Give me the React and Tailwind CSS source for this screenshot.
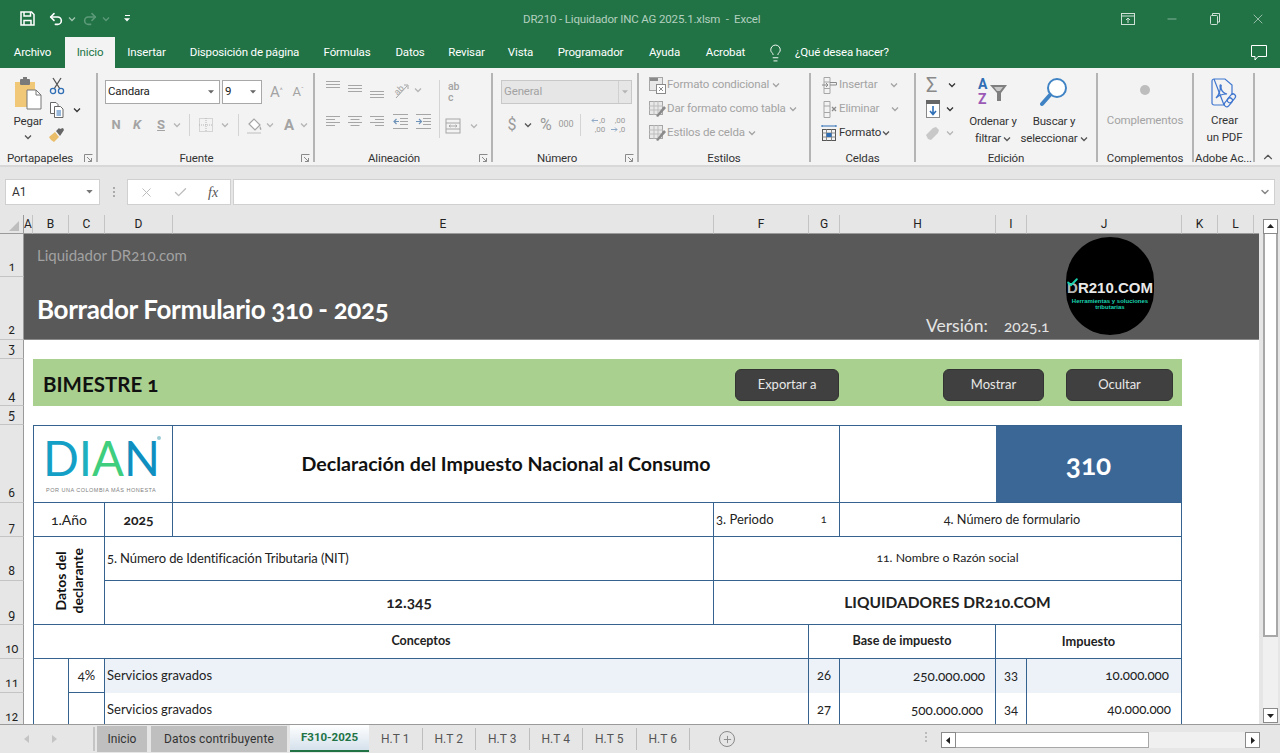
import React from 'react';
import { Undo2, Redo2, ChevronDown, ChevronUp, X, Minus, Check, Plus, Lightbulb } from 'lucide-react';

const Chev = ({ className = 'ml-[4px]', color = '#555' }) => (
  <svg width="8" height="6" viewBox="0 0 8 6" className={`shrink-0 ${className}`}>
    <path d="M1 1.5 L4 4.5 L7 1.5" fill="none" stroke={color} strokeWidth="1.3" />
  </svg>
);

const Caret = ({ className = '', color = '#666' }) => (
  <svg width="8" height="5" viewBox="0 0 8 5" className={className}>
    <path d="M0 0 H8 L4 4.5 Z" fill={color} />
  </svg>
);

const Launcher = ({ className = '', color = '#8a8a8a' }) => (
  <svg width="9" height="9" viewBox="0 0 9 9" className={className}>
    <path d="M0.5 8 V0.5 H8.5 M3 3 L7.5 7.5 M7.5 4 V7.5 H4" fill="none" stroke={color} strokeWidth="1" />
  </svg>
);

// little stacks of lines for the alignment buttons
const Lines = ({ widths = [14, 14, 14], align = 'left', color = '#a6a6a6', offset = 0, step = 3 }) => (
  <svg width="14" height="18" viewBox="0 0 14 18">
    {widths.map((w, i) => {
      const x = align === 'left' ? 0 : align === 'right' ? 14 - w : (14 - w) / 2;
      return <rect key={i} x={x} y={offset + i * step} width={w} height="1" fill={color} />;
    })}
  </svg>
);

const SaveIcon = () => (
  <svg width="15" height="15" viewBox="0 0 15 15" fill="none" stroke="white" strokeWidth="1.5">
    <path d="M1 1 H11.5 L14 3.5 V14 H1 Z" />
    <path d="M4 1 V5 H10.5 V1 M4 14 V9.5 H11 V14" />
  </svg>
);

const PasteIcon = () => (
  <svg width="28" height="34" viewBox="0 0 28 34">
    <path d="M1 5 H21 V30 H1 Z" fill="#f0c878" />
    <rect x="6" y="2" width="10" height="6" fill="#7a7a7a" rx="1" />
    <rect x="9" y="0" width="4" height="3" fill="#7a7a7a" />
    <path d="M13 13 H22 L27 18 V32 H13 Z" fill="#fff" stroke="#777" />
    <path d="M22 13 V18 H27" fill="none" stroke="#777" />
  </svg>
);

const ScissorsIcon = () => (
  <svg width="16" height="18" viewBox="0 0 16 18" fill="none">
    <path d="M4 1 L11 12 M12 1 L5 12" stroke="#555" strokeWidth="1.3" />
    <circle cx="4" cy="14" r="2.6" stroke="#2f6eb5" strokeWidth="1.3" />
    <circle cx="12" cy="14" r="2.6" stroke="#2f6eb5" strokeWidth="1.3" />
  </svg>
);

const CopyIcon = () => (
  <svg width="15" height="16" viewBox="0 0 15 16" fill="#fff" stroke="#666">
    <path d="M1.5 0.5 H7 L9 2.5 V11.5 H1.5 Z" />
    <path d="M5.5 4.5 H11.5 L14 7 V15.5 H5.5 Z" />
    <path d="M7.5 9 H12 M7.5 11 H12 M7.5 13 H12" stroke="#2f6eb5" />
  </svg>
);

const BrushIcon = () => (
  <svg width="16" height="15" viewBox="0 0 16 15">
    <path d="M0 10 L6 5 L10 10 L5 15 C3 14 1 12 0 10 Z" fill="#e9bd69" />
    <path d="M7 4 L10 1 L11 2 L14 1 L15 3 L11 9 Z" fill="#666" />
  </svg>
);

const BorderIcon = () => (
  <svg width="14" height="14" viewBox="0 0 14 14" fill="none" stroke="#b5b5b5" strokeDasharray="1 1">
    <rect x="0.5" y="0.5" width="13" height="13" />
    <path d="M7 0 V14 M0 7 H14" />
  </svg>
);

const FillIcon = () => (
  <svg width="17" height="17" viewBox="0 0 17 17">
    <path d="M3 7 L8 2 L14 8 L9 13 Z" fill="#fff" stroke="#a6a6a6" strokeWidth="1.2" />
    <path d="M14 9 C15 11 16 12 15 13 C14 13 13 11 14 9 Z" fill="#a6a6a6" />
    <rect x="1" y="15" width="14" height="2" fill="#d9d9d9" />
  </svg>
);

const OrientIcon = () => (
  <svg width="20" height="18" viewBox="0 0 20 18" fill="none" className="overflow-visible">
    <text x="3" y="12" fontSize="9" fill="#a6a6a6" transform="rotate(-45 8 9)" fontFamily="Roboto, sans-serif">ab</text>
    <path d="M5 17 L16 5 M13 4 H17 V8" stroke="#a6a6a6" />
  </svg>
);

const IndentIcon = ({ flip }) => (
  <svg width="15" height="15" viewBox="0 0 15 15" fill="none">
    <path d="M0 .5 H15 M7 4.5 H15 M7 7.5 H15 M7 10.5 H15 M0 14.5 H15" stroke="#a6a6a6" />
    <path d={flip ? 'M0 7.5 H5 M3 5 L5.5 7.5 L3 10' : 'M6 7.5 H1 M3.5 5 L1 7.5 L3.5 10'} stroke="#6f93b8" strokeWidth="1.2" />
  </svg>
);

const MergeIcon = () => (
  <svg width="16" height="16" viewBox="0 0 16 16" fill="none" stroke="#a6a6a6">
    <rect x="1" y="1" width="14" height="14" />
    <path d="M1 5 H15 M1 11 H15 M4 8 H12 M4 8 L5.5 6.8 M4 8 L5.5 9.2 M12 8 L10.5 6.8 M12 8 L10.5 9.2" />
  </svg>
);

const Arrow = ({ left }) => (
  <svg width="7" height="5" viewBox="0 0 7 5" className="mr-[1px]">
    <path d={left ? 'M7 2.5 H1 M3 0.5 L1 2.5 L3 4.5' : 'M0 2.5 H6 M4 0.5 L6 2.5 L4 4.5'} fill="none" stroke="#8fa9c6" />
  </svg>
);

const DecimalIcon = ({ top, bottom, left }) => (
  <div className="w-[18px] h-[18px] text-[8px] tracking-normal leading-[9px] text-[#9a9a9a] flex flex-col items-end">
    <div className="flex items-center">{left && <Arrow left />}{top}</div>
    <div className="flex items-center">{!left && <Arrow />}{bottom}</div>
  </div>
);

const TableIcon = ({ kind }) => (
  <svg width="17" height="17" viewBox="0 0 17 17">
    <rect x="0.5" y="0.5" width="13" height="13" fill="#e8e8e8" stroke="#a6a6a6" />
    {kind === 'cond' && <rect x="1" y="1" width="8" height="3" fill="#8a8a8a" />}
    {kind === 'cond' && <rect x="7.5" y="7.5" width="9" height="9" fill="#fff" stroke="#8a8a8a" />}
    {kind === 'cond' && <path d="M10 10 L14 14 M14 10 L10 14" stroke="#8a8a8a" />}
    {kind !== 'cond' && <path d="M0 5 H14 M0 9 H14 M5 0 V14 M9 0 V14" stroke="#bdbdbd" />}
    {kind !== 'cond' && <path d="M7 15 L15 5 L17 7 L9 16 Z" fill="#8a8a8a" />}
  </svg>
);

const CellsIcon = ({ kind }) => (
  <svg width="16" height="17" viewBox="0 0 16 17" fill="none" stroke="#a6a6a6">
    <path d="M3 .5 H9 V5 H3 Z M3 11.5 H9 V16.5 H3 Z M3 5 V11.5 M9 5 V11.5" />
    {kind === 'ins' && <path d="M9 8 H15.5 V5.5 H9 M1 8 H7 M5 6 L7 8 L5 10" stroke="#8a8a8a" />}
    {kind === 'del' && <path d="M11 6 L15 10 M15 6 L11 10" stroke="#8a8a8a" strokeWidth="1.3" />}
  </svg>
);

const FormatIcon = () => (
  <svg width="16" height="17" viewBox="0 0 16 17" fill="none">
    <path d="M1 1 H15 M1 0 V2 M15 0 V2" stroke="#2f6eb5" />
    <rect x="1.5" y="4.5" width="13" height="11" stroke="#555" />
    <path d="M1.5 8 H14.5 M1.5 12 H14.5 M5.5 4.5 V15.5 M10.5 4.5 V15.5" stroke="#888" />
    <rect x="5.5" y="8" width="5" height="4" fill="#2f6eb5" />
  </svg>
);

const FillDownIcon = () => (
  <svg width="14" height="18" viewBox="0 0 14 18">
    <rect x="0.5" y="0.5" width="13" height="17" fill="#fff" stroke="#888" />
    <rect x="0" y="0" width="14" height="4" fill="#666" />
    <path d="M7 6 V14 M4 11 L7 14.5 L10 11" fill="none" stroke="#2f6eb5" strokeWidth="1.6" />
  </svg>
);

const EraserIcon = () => (
  <svg width="14" height="13" viewBox="0 0 14 13">
    <path d="M0 8 L7 1 L10 0 L13 3 L12 6 L5 13 L2 12 Z" fill="#c8c8c8" />
  </svg>
);

const SortIcon = () => (
  <div className="relative w-[30px] h-[30px] font-bold text-[14px] leading-[14px] tracking-normal">
    <div className="text-[#2f6eb5]">A</div>
    <div className="text-[#9b59b6] mt-[1px]">Z</div>
    <svg width="18" height="18" viewBox="0 0 18 18" className="absolute left-[12px] top-[7px]">
      <path d="M0 1 H17 L11 9 V17 H7 V9 Z" fill="#7f7f7f" />
      <path d="M4 3 H13 L10 7 H7 Z" fill="#c8c8c8" />
    </svg>
  </div>
);

const FindIcon = () => (
  <svg width="28" height="30" viewBox="0 0 28 30" fill="none">
    <circle cx="17" cy="11" r="9" stroke="#3f83c4" strokeWidth="2" fill="#fff" />
    <path d="M10 18 L2 27" stroke="#3f83c4" strokeWidth="4" strokeLinecap="round" />
  </svg>
);

const PdfIcon = () => (
  <svg width="27" height="31" viewBox="0 0 27 31" fill="none" stroke="#3f76cf" strokeWidth="1.2">
    <path d="M3 1 H14 L21 7 V17 M13 27 H3 C2 27 1 26 1 25 V3 C1 2 2 1 3 1 Z" />
    <path d="M5 20 C8 17 10 11 9 8 C9 6 11 7 10 9 C10 12 12 15 16 16 C12 16 8 17 5 20 Z" />
    <rect x="15" y="18" width="10" height="5" rx="2.5" transform="rotate(-50 20 20)" />
    <rect x="12" y="22" width="10" height="5" rx="2.5" transform="rotate(-50 17 24)" />
  </svg>
);

const RibbonIcon = () => (
  <svg width="14" height="12" viewBox="0 0 14 12" fill="none" stroke="#cfe0d6">
    <rect x="0.5" y="0.5" width="13" height="11" />
    <path d="M0 3 H14 M7 10 V5 M5 7 L7 5 L9 7" />
  </svg>
);

const RestoreIcon = () => (
  <svg width="10" height="12" viewBox="0 0 10 12" fill="none" stroke="#cfe0d6">
    <rect x="0.5" y="2.5" width="7" height="9" rx="1" />
    <path d="M2.5 2.5 V0.5 H9.5 V9 H7.5" />
  </svg>
);

const CommentIcon = () => (
  <svg width="16" height="16" viewBox="0 0 16 16" fill="none" stroke="white">
    <path d="M0.5 0.5 H15.5 V11.5 H7 L4 15 V11.5 H0.5 Z" />
  </svg>
);

const tabs = [
  { label: 'Archivo', w: 'w-[65px]' },
  { label: 'Inicio', w: 'w-[50px]', active: true },
  { label: 'Insertar', w: 'w-[63px]' },
  { label: 'Disposición de página', w: 'w-[133px]' },
  { label: 'Fórmulas', w: 'w-[72px]' },
  { label: 'Datos', w: 'w-[54px]' },
  { label: 'Revisar', w: 'w-[59px]' },
  { label: 'Vista', w: 'w-[49px]' },
  { label: 'Programador', w: 'w-[91px]' },
  { label: 'Ayuda', w: 'w-[57px]' },
  { label: 'Acrobat', w: 'w-[65px]' },
];

const TitleBar = () => (
  <div className="h-[37px] bg-[#217346] flex items-center relative shrink-0">
    <div className="ml-[20px] flex items-center">
      <SaveIcon />
      <Undo2 className="ml-[13px] w-[16px] h-[16px] text-white" strokeWidth={2.4} />
      <Chev className="ml-[4px]" color="#9fc4ae" />
      <Redo2 className="ml-[6px] w-[16px] h-[16px] text-[#5c9a78]" strokeWidth={2.4} />
      <Chev className="ml-[4px]" color="#5c9a78" />
      <div className="ml-[14px] flex flex-col items-center gap-[2px]">
        <div className="w-[5px] h-[1px] bg-white" />
        <Caret color="white" className="w-[6px] h-[4px]" />
      </div>
    </div>
    <div className="absolute left-[523px] top-[11px] text-[11.5px] tracking-[-0.15px] leading-[16px] text-[#b4d0bf] whitespace-pre">
      DR210 - Liquidador INC AG 2025.1.xlsm  -  Excel
    </div>
    <div className="ml-auto flex items-center">
      <div className="w-[44px] flex justify-center"><RibbonIcon /></div>
      <div className="w-[43px] flex justify-center"><Minus className="w-[14px] h-[14px] text-[#cfe0d6]" strokeWidth={1} /></div>
      <div className="w-[43px] flex justify-center"><RestoreIcon /></div>
      <div className="w-[44px] flex justify-center"><X className="w-[16px] h-[16px] text-[#cfe0d6]" strokeWidth={1} /></div>
    </div>
  </div>
);

const TabRow = () => (
  <div className="h-[31px] bg-[#217346] flex items-stretch shrink-0 text-[11.5px] tracking-[-0.15px] text-white">
    {tabs.map(t => (
      <div
        key={t.label}
        className={`${t.w} flex items-center justify-center ${t.active ? 'bg-[#f3f3f3] text-[#217346]' : ''}`}
      >
        {t.label}
      </div>
    ))}
    <Lightbulb className="ml-[8px] mt-[6px] w-[19px] h-[20px] text-white" strokeWidth={1.2} />
    <div className="ml-[10px] flex items-center">¿Qué desea hacer?</div>
    <div className="ml-auto mr-[13px] flex items-center"><CommentIcon /></div>
  </div>
);

const Group = ({ w, label, launcher, children }) => (
  <div className={`${w} h-[89px] border-r-2 border-[#b4b4b4] flex flex-col shrink-0`}>
    <div className="h-[78px] flex shrink-0">{children}</div>
    <div className="h-[16px] shrink-0 relative flex items-center justify-center text-[#333]">
      {label}
      {launcher && <Launcher className="absolute right-[3px] top-[3px]" />}
    </div>
  </div>
);

const MenuRow = ({ icon, text, dim, chevClass = 'ml-[3px]', iconClass = 'w-[18px]' }) => (
  <div className={`h-[24px] flex items-center whitespace-nowrap ${dim ? 'text-[#a3a3a3]' : 'text-[#333]'}`}>
    <div className={`${iconClass} shrink-0 flex justify-center`}>{icon}</div>
    <span className="ml-[1px]">{text}</span>
    <Chev className={chevClass} color={dim ? '#a3a3a3' : '#555'} />
  </div>
);

const Ribbon = () => (
  <div className="h-[99px] bg-[#f3f3f3] border-b-2 border-[#d8d8d8] pt-[5px] flex shrink-0 relative text-[11.5px] tracking-[-0.15px]">
    <Group w="w-[98px]" label={<span className="mr-[16px]">Portapapeles</span>} launcher>
      <div className="ml-[12px] w-[32px] flex flex-col items-center">
        <div className="mt-[4px]"><PasteIcon /></div>
        <div className="mt-[2px] leading-[16px] text-[#333]">Pegar</div>
        <Chev className="mt-[5px]" />
      </div>
      <div className="ml-[5px] flex flex-col pt-[1px]">
        <div className="h-[24px] flex items-center"><ScissorsIcon /></div>
        <div className="h-[24px] flex items-center"><CopyIcon /><Chev className="ml-[9px]" color="#333" /></div>
        <div className="h-[24px] flex items-center"><BrushIcon /></div>
      </div>
    </Group>

    <Group w="w-[217px]" label={<span className="ml-[-18px]">Fuente</span>} launcher>
      <div className="ml-[7px] pt-[7px] flex flex-col gap-[9px]">
        <div className="h-[24px] flex items-center">
          <div className="w-[115px] h-[24px] bg-white border border-[#a8a8a8] flex items-center justify-between pl-[2px] pr-[5px] text-[#222]">
            Candara <Caret className="w-[6px] h-[4px]" />
          </div>
          <div className="ml-[2px] w-[40px] h-[24px] bg-white border border-[#a8a8a8] flex items-center justify-between pl-[2px] pr-[5px] text-[#222]">
            9 <Caret className="w-[6px] h-[4px]" />
          </div>
          <span className="ml-[8px] text-[15px] text-[#a3a3a3]">A<sup className="text-[7px]">^</sup></span>
          <span className="ml-[10px] text-[13px] text-[#a3a3a3]">A<sup className="text-[7px]">ˇ</sup></span>
        </div>
        <div className="h-[24px] flex items-center font-bold text-[#a3a3a3]">
          <span className="ml-[5px] w-[12px] text-[13px] text-center">N</span>
          <span className="ml-[9px] w-[12px] text-[13px] text-center italic">K</span>
          <span className="ml-[12px] w-[12px] text-[13px] text-center underline">S</span>
          <Chev className="ml-[6px]" color="#b5b5b5" />
          <div className="ml-[8px] w-[1px] h-[22px] bg-[#d4d4d4]" />
          <div className="ml-[9px]"><BorderIcon /></div>
          <Chev className="ml-[8px]" color="#b5b5b5" />
          <div className="ml-[9px] w-[1px] h-[22px] bg-[#d4d4d4]" />
          <div className="ml-[7px]"><FillIcon /></div>
          <Chev className="ml-[3px]" color="#b5b5b5" />
          <span className="ml-[10px] text-[15px]">A</span>
          <Chev className="ml-[6px]" color="#b5b5b5" />
        </div>
      </div>
    </Group>

    <Group w="w-[178px]" label={<span className="ml-[-18px]">Alineación</span>} launcher>
      <div className="ml-[11px] pt-[8px] flex flex-col gap-[13px] w-[112px]">
        <div className="h-[18px] flex items-center">
          <div className="w-[15px] h-[18px]"><Lines /></div>
          <div className="ml-[7px] w-[15px] h-[18px]"><Lines offset={4} /></div>
          <div className="ml-[7px] w-[15px] h-[18px]"><Lines offset={10} /></div>
          <div className="ml-[6px]"><OrientIcon /></div>
          <Chev className="ml-[3px]" color="#b5b5b5" />
        </div>
        <div className="h-[18px] flex items-center">
          <div className="w-[15px] h-[18px]"><Lines widths={[14, 9, 14, 9]} offset={4} /></div>
          <div className="ml-[7px] w-[15px] h-[18px]"><Lines widths={[14, 9, 14, 9]} align="center" offset={4} /></div>
          <div className="ml-[7px] w-[15px] h-[18px]"><Lines widths={[14, 9, 14, 9]} align="right" offset={4} /></div>
          <div className="ml-[8px]"><IndentIcon /></div>
          <div className="ml-[8px]"><IndentIcon flip /></div>
        </div>
      </div>
      <div className="ml-[1px] w-[1px] h-[58px] mt-[7px] bg-[#d4d4d4]" />
      <div className="ml-[5px] pt-[8px] flex flex-col text-[#a3a3a3]">
        <div className="h-[22px] text-[10.5px] leading-[11px] font-medium pl-[3px]">ab<br />c</div>
        <div className="mt-[15px] flex items-center">
          <MergeIcon />
          <Chev className="ml-[9px]" color="#b5b5b5" />
        </div>
      </div>
    </Group>

    <Group w="w-[146px]" label={<span className="ml-[-16px]">Número</span>} launcher>
      <div className="ml-[8px] pt-[7px] flex flex-col gap-[9px]">
        <div className="w-[131px] h-[24px] bg-[#e6e6e6] border border-[#c8c8c8] flex items-center justify-between pl-[2px] pr-[3px] text-[#a3a3a3]">
          General
          <div className="h-[22px] border-l border-[#d0d0d0] pl-[3px] flex items-center"><Caret className="w-[6px] h-[4px]" color="#b5b5b5" /></div>
        </div>
        <div className="h-[24px] flex items-center text-[#9a9a9a]">
          <span className="ml-[6px] w-[10px] text-[16px] text-center">$</span>
          <Chev className="ml-[7px]" color="#555" />
          <span className="ml-[8px] text-[16px]">%</span>
          <span className="ml-[7px] text-[9px]">000</span>
          <div className="ml-[7px] w-[1px] h-[22px] bg-[#d4d4d4]" />
          <div className="ml-[6px]"><DecimalIcon top=",0" bottom=",00" left /></div>
          <div className="ml-[2px]"><DecimalIcon top=",00" bottom=",0" /></div>
        </div>
      </div>
    </Group>

    <Group w="w-[172px]" label="Estilos">
      <div className="ml-[9px] flex flex-col pt-0">
        <MenuRow dim icon={<TableIcon kind="cond" />} text="Formato condicional" />
        <MenuRow dim icon={<TableIcon />} text="Dar formato como tabla" />
        <MenuRow dim icon={<TableIcon />} text="Estilos de celda" />
      </div>
    </Group>

    <Group w="w-[105px]" label="Celdas">
      <div className="ml-[9px] flex flex-col">
        <MenuRow dim icon={<CellsIcon kind="ins" />} text="Insertar" chevClass="ml-[13px]" />
        <MenuRow dim icon={<CellsIcon kind="del" />} text="Eliminar" chevClass="ml-[12px]" />
        <MenuRow icon={<FormatIcon />} text="Formato" chevClass="ml-[1px]" />
      </div>
    </Group>

    <Group w="w-[182px]" label="Edición">
      <div className="ml-[10px] flex flex-col w-[40px]">
        <div className="h-[24px] flex items-center">
          <span className="text-[20px] leading-[20px] text-[#8a8a8a]">Σ</span>
          <Chev className="ml-[11px]" color="#333" />
        </div>
        <div className="h-[24px] flex items-center"><FillDownIcon /><Chev className="ml-[6px]" color="#333" /></div>
        <div className="h-[24px] flex items-center"><EraserIcon /><Chev className="ml-[6px]" color="#b5b5b5" /></div>
      </div>
      <div className="ml-[2px] w-[50px] flex flex-col items-center leading-[17px] text-[#333]">
        <div className="mt-[4px] h-[30px]"><SortIcon /></div>
        <div className="mt-[6px] whitespace-nowrap">Ordenar y</div>
        <div className="flex items-center">filtrar<Chev className="ml-[2px]" /></div>
      </div>
      <div className="ml-[1px] w-[70px] flex flex-col items-center leading-[17px] text-[#333]">
        <div className="mt-[4px] h-[30px]"><FindIcon /></div>
        <div className="mt-[6px] whitespace-nowrap">Buscar y</div>
        <div className="flex items-center">seleccionar<Chev className="ml-[2px]" /></div>
      </div>
    </Group>

    <Group w="w-[96px]" label="Complementos">
      <div className="w-full flex flex-col items-center">
        <div className="mt-[12px] w-[10px] h-[10px] rounded-full bg-[#bdbdbd]" />
        <div className="mt-[17px] leading-[17px] text-[#a3a3a3]">Complementos</div>
      </div>
    </Group>

    <Group w="w-[61px]" label="Adobe Ac...">
      <div className="w-full flex flex-col items-center pl-[2px] leading-[17px] text-[#333]">
        <div className="mt-[5px] h-[31px]"><PdfIcon /></div>
        <div className="mt-[3px]">Crear</div>
        <div>un PDF</div>
      </div>
    </Group>

    <div className="flex-1 flex items-end justify-center pb-[1px]">
      <ChevronUp className="w-[14px] h-[14px] text-[#555]" />
    </div>
  </div>
);

const FormulaBar = () => (
  <div className="h-[48px] bg-[#e6e6e6] flex items-start pt-[12px] shrink-0 text-[#333]">
    <div className="ml-[5px] w-[95px] h-[26px] bg-white border border-[#d0d0d0] flex items-center justify-between pl-[6px] pr-[6px] text-[12px]">
      A1 <Caret className="w-[7px] h-[4px]" color="#777" />
    </div>
    <div className="ml-[13px] mt-[8px] flex flex-col gap-[2px]">
      <div className="w-[2px] h-[2px] bg-[#aaa]" />
      <div className="w-[2px] h-[2px] bg-[#aaa]" />
      <div className="w-[2px] h-[2px] bg-[#aaa]" />
    </div>
    <div className="ml-[12px] w-[104px] h-[26px] bg-white border border-[#d0d0d0] flex items-center">
      <X className="ml-[11px] w-[15px] h-[15px] text-[#bdbdbd]" strokeWidth={1.6} />
      <Check className="ml-[19px] w-[15px] h-[15px] text-[#bdbdbd]" strokeWidth={2.2} />
      <span className="ml-[20px] text-[14px] italic font-['Liberation_Serif',serif] text-[#555]">fx</span>
    </div>
    <div className="ml-[2px] flex-1 mr-[5px] h-[26px] bg-white border border-[#d0d0d0] flex items-center justify-end pr-[3px]">
      <ChevronDown className="w-[12px] h-[12px] text-[#888]" strokeWidth={3} />
    </div>
  </div>
);

const columns = [
  { l: 'A', c: 'col-[2]' }, { l: 'B', c: 'col-[3]' }, { l: 'C', c: 'col-[4]' }, { l: 'D', c: 'col-[5]' },
  { l: 'E', c: 'col-[6]' }, { l: 'F', c: 'col-[7]' }, { l: 'G', c: 'col-[8]' }, { l: 'H', c: 'col-[9]' },
  { l: 'I', c: 'col-[10]' }, { l: 'J', c: 'col-[11]' }, { l: 'K', c: 'col-[12]' }, { l: 'L', c: 'col-[13]' },
];

const rowLabels = [
  { l: '1', c: 'row-[2]' }, { l: '2', c: 'row-[3]' }, { l: '3', c: 'row-[4]' }, { l: '4', c: 'row-[5]' },
  { l: '5', c: 'row-[6]' }, { l: '6', c: 'row-[7]' }, { l: '7', c: 'row-[8]' }, { l: '8', c: 'row-[9]' },
  { l: '9', c: 'row-[10]' }, { l: '10', c: 'row-[11]' }, { l: '11', c: 'row-[12]' }, { l: '12', c: 'row-[13]' },
];

const line = 'border-[#36628f]';

const DianLogo = () => (
  <div className="flex flex-col items-start pl-[12px] pt-[9px]">
    <svg width="116" height="44" viewBox="0 0 116 44" className="overflow-visible">
      <text x="-3" y="41" fontSize="48" fontWeight="400" fontFamily="Lato, sans-serif" textLength="117" lengthAdjust="spacingAndGlyphs">
        <tspan fill="#14a0c6">D</tspan>
        <tspan fill="#1fb0c0">I</tspan>
        <tspan fill="#3fce7e">A</tspan>
        <tspan fill="#0f8fc0">N</tspan>
      </text>
      <circle cx="113" cy="3" r="2" fill="#9ccbd6" />
    </svg>
    <div className="mt-[7px] text-[5.5px] leading-[8px] tracking-[0.5px] text-[#808080] font-['Liberation_Sans',sans-serif] whitespace-nowrap">
      POR UNA COLOMBIA MÁS HONESTA
    </div>
  </div>
);

const BrandLogo = () => (
  <div className="absolute left-[1066px] top-[22px] w-[88px] h-[98px] rounded-full bg-black flex flex-col items-center justify-center pt-[17px] font-['Liberation_Sans',sans-serif]">
    <div className="flex items-center text-[15px] leading-[18px] font-bold text-[#e8e8e8] whitespace-nowrap">
      <span className="text-[#b5b5b5] relative">D
        <Check className="absolute left-[-1px] top-[-3px] w-[13px] h-[13px] text-[#19d3b0]" strokeWidth={3.5} />
      </span>R210.COM
    </div>
    <div className="mt-[1px] text-[6px] leading-[6.5px] font-bold text-[#19d3b0] text-center whitespace-nowrap">
      Herramientas y soluciones<br />tributarias
    </div>
  </div>
);

const SheetButton = ({ w, className = '', children }) => (
  <div className={`${w} ${className} h-[32px] bg-[#404040] border border-[#333] rounded-md flex items-center justify-center text-[13px] text-[#e8e8e8]`}>
    {children}
  </div>
);

const Sheet = () => (
  <div className="relative h-full grid grid-cols-[24px_9px_36px_36px_68px_541px_95px_31px_156px_31px_155px_36px_36px_5px] grid-rows-[19px_43px_63px_19px_47px_19px_78px_34px_44px_44px_34px_34px_34px] overflow-hidden bg-white font-['Lato',sans-serif] [font-variant-numeric:oldstyle-nums] text-[#222]">
    <div className="col-[1] row-[1] bg-[#e6e6e6] border-b border-r border-[#9a9a9a] flex items-end justify-center">
      <svg width="12" height="12" viewBox="0 0 12 12" className="ml-[5px] mb-[1px]"><path d="M11 1 V11 H1 Z" fill="#bdbdbd" /></svg>
    </div>
    {columns.map(c => (
      <div key={c.l} className={`${c.c} row-[1] bg-[#e6e6e6] border-b border-r border-b-[#9a9a9a] border-r-[#c4c4c4] flex items-center justify-center text-[12px] text-[#222] font-['Roboto',sans-serif]`}>
        {c.l}
      </div>
    ))}
    <div className="col-[14] row-[1] bg-[#e6e6e6] border-b border-[#9a9a9a]" />
    {rowLabels.map(r => (
      <div key={r.l} className={`col-[1] ${r.c} bg-[#e6e6e6] border-b border-r border-b-[#c4c4c4] border-r-[#9a9a9a] flex items-end justify-center pb-[2px] text-[12px] leading-[14px] text-[#222] font-['Roboto',sans-serif]`}>
        {r.l}
      </div>
    ))}

    <div className="col-[2/15] row-[2/4] bg-[#595959] border-b border-[#8a8a8a] pl-[13px] flex flex-col">
      <div className="mt-[11px] text-[15px] leading-[20px] text-[#a2a2a2]">Liquidador DR210.com</div>
      <div className="mt-[25px] flex items-start">
        <div className="w-[889px] text-[26px] leading-[38px] font-bold text-white tracking-[-0.35px] whitespace-nowrap">Borrador Formulario 310 - 2025</div>
        <div className="mt-[24px] text-[17.5px] leading-[24px] text-[#e4e4e4] whitespace-nowrap">Versión:</div>
        <div className="ml-[16px] mt-[24px] text-[15.5px] leading-[24px] text-[#e4e4e4]">2025.1</div>
      </div>
    </div>
    <BrandLogo />

    <div className="col-[3/12] row-[5] bg-[#a9d08e] flex items-center pl-[10px] pt-[4px]">
      <div className="w-[692px] text-[20.5px] font-bold text-[#111]">BIMESTRE 1</div>
      <SheetButton w="w-[104px]">Exportar a</SheetButton>
      <SheetButton w="w-[101px]" className="ml-[104px]">Mostrar</SheetButton>
      <SheetButton w="w-[107px]" className="ml-[22px]">Ocultar</SheetButton>
    </div>

    <div className={`col-[3/6] row-[7] border-t border-l border-r border-b ${line}`}><DianLogo /></div>
    <div className={`col-[6/9] row-[7] border-t border-r border-b ${line} flex items-center justify-center text-[19.6px] font-bold text-[#111]`}>
      Declaración del Impuesto Nacional al Consumo
    </div>
    <div className={`col-[9] row-[7] border-t border-b ${line}`} />
    <div className={`col-[10/12] row-[7] border-t border-r border-b ${line} bg-[#3b6797] flex items-center justify-center text-[28px] font-bold text-white`}>
      310
    </div>

    <div className={`col-[3/5] row-[8] border-l border-r border-b ${line} flex items-center justify-center text-[14px]`}>1.Año</div>
    <div className={`col-[5] row-[8] border-r border-b ${line} flex items-center justify-center text-[14px] font-bold`}>2025</div>
    <div className={`col-[6] row-[8] border-r border-b ${line}`} />
    <div className={`col-[7/9] row-[8] border-r border-b ${line} flex items-center pl-[2px] text-[13px]`}>
      3. Periodo <span className="ml-[47px] text-[11px]">1</span>
    </div>
    <div className={`col-[9/12] row-[8] border-r border-b ${line} flex items-center justify-center pl-[3px] text-[12.7px]`}>4. Número de formulario</div>

    <div className={`col-[3/5] row-[9/11] border-l border-r border-b ${line} flex items-center justify-center`}>
      <div className="[writing-mode:vertical-rl] rotate-180 text-[14px] leading-[17px] font-bold text-center text-[#111]">Datos del<br />declarante</div>
    </div>
    <div className={`col-[5/7] row-[9] border-r border-b ${line} flex items-center pl-[2px] text-[13px] tracking-[-0.1px]`}>5. Número de Identificación Tributaria (NIT)</div>
    <div className={`col-[7/12] row-[9] border-r border-b ${line} flex items-center justify-center text-[12.25px]`}>11. Nombre o Razón social</div>
    <div className={`col-[5/7] row-[10] border-r border-b ${line} flex items-center justify-center text-[15.5px] font-bold`}>12.345</div>
    <div className={`col-[7/12] row-[10] border-r border-b ${line} flex items-center justify-center text-[15.5px] font-bold`}>LIQUIDADORES DR210.COM</div>

    <div className={`col-[3/8] row-[11] border-l border-r border-b ${line} flex items-center justify-center text-[12.5px] font-bold`}>Conceptos</div>
    <div className={`col-[8/10] row-[11] border-r border-b ${line} flex items-center justify-center text-[12.6px] font-bold`}>Base de impuesto</div>
    <div className={`col-[10/12] row-[11] border-r border-b ${line} flex items-center justify-center text-[12.8px] font-bold`}>Impuesto</div>

    <div className={`col-[3] row-[12/14] border-l border-r ${line}`} />
    <div className={`col-[4] row-[12] border-r border-b ${line} flex items-center justify-center text-[13px]`}>4%</div>
    <div className={`col-[4] row-[13] border-r ${line}`} />

    <div className="col-[5/8] row-[12] bg-[#edf2f8] border-r border-[#36628f] flex items-center pl-[2px] text-[13px]">Servicios gravados</div>
    <div className={`col-[8] row-[12] bg-[#edf2f8] border-r ${line} flex items-center justify-center text-[13px]`}>26</div>
    <div className={`col-[9] row-[12] bg-[#edf2f8] border-r ${line} flex items-center justify-end pr-[10px] text-[13.5px]`}>250.000.000</div>
    <div className={`col-[10] row-[12] bg-[#edf2f8] border-r ${line} flex items-center justify-center text-[13px]`}>33</div>
    <div className={`col-[11] row-[12] bg-[#edf2f8] border-r ${line} flex items-center justify-end pr-[12px] text-[13.3px]`}>10.000.000</div>

    <div className={`col-[5/8] row-[13] border-r ${line} flex items-center pl-[2px] text-[13px]`}>Servicios gravados</div>
    <div className={`col-[8] row-[13] border-r ${line} flex items-center justify-center text-[13px]`}>27</div>
    <div className={`col-[9] row-[13] border-r ${line} flex items-center justify-end pr-[12px] text-[13.5px]`}>500.000.000</div>
    <div className={`col-[10] row-[13] border-r ${line} flex items-center justify-center text-[13px]`}>34</div>
    <div className={`col-[11] row-[13] border-r ${line} flex items-center justify-end pr-[10px] text-[13.3px]`}>40.000.000</div>
  </div>
);

const ScrollBtn = ({ dir, className = '' }) => (
  <div className={`w-[15px] h-[15px] bg-white border border-[#8a8a8a] flex items-center justify-center shrink-0 ${className}`}>
    <svg width="7" height="7" viewBox="0 0 7 7">
      {dir === 'up' && <path d="M3.5 1 L7 5 H0 Z" fill="#222" />}
      {dir === 'down' && <path d="M3.5 6 L7 2 H0 Z" fill="#222" />}
      {dir === 'left' && <path d="M1 3.5 L5 0 V7 Z" fill="#222" />}
      {dir === 'right' && <path d="M6 3.5 L2 0 V7 Z" fill="#222" />}
    </svg>
  </div>
);

const VScroll = () => (
  <div className="w-[21px] bg-[#e6e6e6] pl-[4px] pr-[2px] pt-[4px] pb-[1px] flex flex-col">
    <ScrollBtn dir="up" />
    <div className="flex-1 bg-[#f0f0f0] flex flex-col">
      <div className="h-[403px] bg-white border-x-2 border-b-2 border-[#a8a8a8]" />
    </div>
    <ScrollBtn dir="down" />
  </div>
);

const sheetTabs = ['H.T 1', 'H.T 2', 'H.T 3', 'H.T 4', 'H.T 5', 'H.T 6'];

const BottomBar = () => (
  <div className="h-[29px] bg-[#e6e6e6] border-t border-[#9a9a9a] flex items-stretch text-[12px] text-[#444] shrink-0">
    <div className="w-[93px] flex items-center text-[#bdbdbd] shrink-0 pl-[24px]">
      <svg width="6" height="8" viewBox="0 0 6 8"><path d="M0 4 L5 0 V8 Z" fill="#c4c4c4" /></svg>
      <svg width="6" height="8" viewBox="0 0 6 8" className="ml-[21px]"><path d="M6 4 L1 0 V8 Z" fill="#c4c4c4" /></svg>
    </div>
    <div className="w-[2px] h-[24px] mt-[2px] bg-[#c4c4c4]" />
    <div className="w-[50px] my-[1px] ml-[2px] bg-[#bfbfbf] flex items-center justify-center text-[#333]">Inicio</div>
    <div className="w-[136px] my-[1px] ml-[4px] bg-[#bfbfbf] flex items-center justify-center text-[#333] tracking-[0.15px]">Datos contribuyente</div>
    <div className="w-[79px] ml-[3px] mb-[1px] bg-gradient-to-b from-white to-[#d5e1ec] border-b-2 border-[#217346] flex items-center justify-center text-[11.5px] font-bold text-[#217346]">F310-2025</div>
    {sheetTabs.map(t => (
      <div key={t} className="w-[53.5px] flex items-center justify-center border-r border-[#bdbdbd] my-[3px] text-[#555]">{t}</div>
    ))}
    <div className="ml-[29px] w-[16px] h-[16px] mt-[6px] rounded-full border border-[#8a8a8a] flex items-center justify-center">
      <Plus className="w-[11px] h-[11px] text-[#8a8a8a]" strokeWidth={2} />
    </div>
    <div className="ml-[190px] mt-[7px] flex flex-col gap-[2px]">
      <div className="w-[2px] h-[2px] bg-[#bbb]" />
      <div className="w-[2px] h-[2px] bg-[#bbb]" />
      <div className="w-[2px] h-[2px] bg-[#bbb]" />
    </div>
    <div className="ml-[14px] w-[319px] h-[16px] mt-[7px] flex bg-[#f0f0f0]">
      <ScrollBtn dir="left" className="h-[16px]" />
      <div className="w-[193px] bg-white border-y border-r border-[#a8a8a8]" />
      <div className="flex-1" />
      <ScrollBtn dir="right" className="h-[16px]" />
    </div>
  </div>
);

const App = () => (
  <div className="w-[1280px] h-[753px] overflow-hidden flex flex-col bg-[#e6e6e6] font-['Roboto',sans-serif]">
    <TitleBar />
    <TabRow />
    <Ribbon />
    <FormulaBar />
    <div className="h-[509px] flex overflow-hidden relative">
      <Sheet />
      <VScroll />
    </div>
    <BottomBar />
  </div>
);

export default App;
